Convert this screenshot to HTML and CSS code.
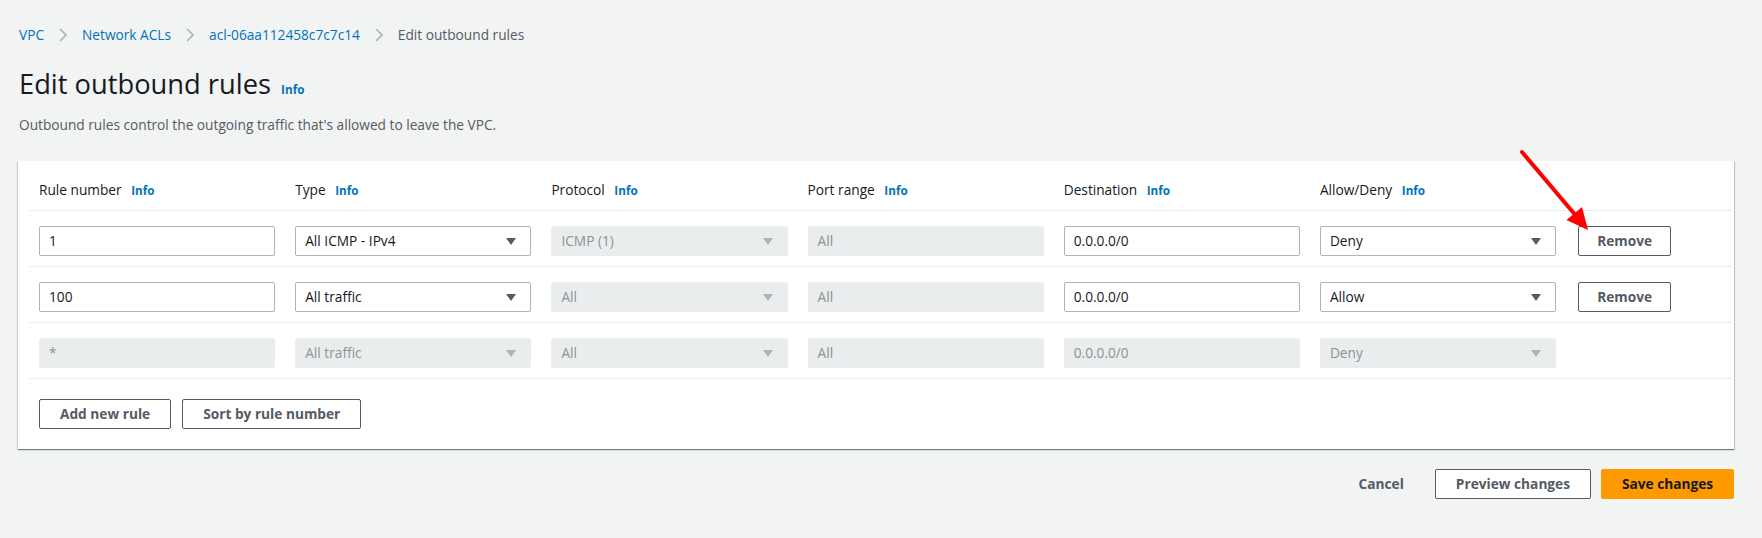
FILE: index.html
```html
<!DOCTYPE html>
<html lang="en">
<head>
<meta charset="utf-8">
<title>Edit outbound rules</title>
<link rel="stylesheet" href="styles.css">
</head>
<body>
<div class="page">
  <nav class="crumbs">
    <a class="crumb-link" href="#">VPC</a>
    <svg class="chev" viewBox="0 0 8 14" width="8" height="14"><path d="M1 1l6 6-6 6" fill="none" stroke="#aab7b8" stroke-width="1.6"/></svg>
    <a class="crumb-link" href="#">Network ACLs</a>
    <svg class="chev" viewBox="0 0 8 14" width="8" height="14"><path d="M1 1l6 6-6 6" fill="none" stroke="#aab7b8" stroke-width="1.6"/></svg>
    <a class="crumb-link" href="#">acl-06aa112458c7c7c14</a>
    <svg class="chev" viewBox="0 0 8 14" width="8" height="14"><path d="M1 1l6 6-6 6" fill="none" stroke="#aab7b8" stroke-width="1.6"/></svg>
    <span class="crumb-current">Edit outbound rules</span>
  </nav>

  <h1 class="title">Edit outbound rules <a class="info" href="#">Info</a></h1>
  <p class="desc">Outbound rules control the outgoing traffic that's allowed to leave the VPC.</p>

  <section class="panel">
    <div class="table">
      <div class="row head">
        <div class="hcell">Rule number <a class="info" href="#">Info</a></div>
        <div class="hcell">Type <a class="info" href="#">Info</a></div>
        <div class="hcell">Protocol <a class="info" href="#">Info</a></div>
        <div class="hcell">Port range <a class="info" href="#">Info</a></div>
        <div class="hcell">Destination <a class="info" href="#">Info</a></div>
        <div class="hcell">Allow/Deny <a class="info" href="#">Info</a></div>
        <div class="hcell"></div>
      </div>

      <div class="row">
        <div class="field">1</div>
        <div class="field select">All ICMP - IPv4<span class="tri"></span></div>
        <div class="field select disabled">ICMP (1)<span class="tri"></span></div>
        <div class="field disabled">All</div>
        <div class="field">0.0.0.0/0</div>
        <div class="field select">Deny<span class="tri"></span></div>
        <button class="btn remove">Remove</button>
      </div>

      <div class="row">
        <div class="field">100</div>
        <div class="field select">All traffic<span class="tri"></span></div>
        <div class="field select disabled">All<span class="tri"></span></div>
        <div class="field disabled">All</div>
        <div class="field">0.0.0.0/0</div>
        <div class="field select">Allow<span class="tri"></span></div>
        <button class="btn remove">Remove</button>
      </div>

      <div class="row">
        <div class="field disabled">*</div>
        <div class="field select disabled">All traffic<span class="tri"></span></div>
        <div class="field select disabled">All<span class="tri"></span></div>
        <div class="field disabled">All</div>
        <div class="field disabled">0.0.0.0/0</div>
        <div class="field select disabled">Deny<span class="tri"></span></div>
        <div></div>
      </div>
    </div>

    <div class="panel-actions">
      <button class="btn">Add new rule</button>
      <button class="btn">Sort by rule number</button>
    </div>
  </section>

  <div class="footer">
    <button class="btn link">Cancel</button>
    <button class="btn">Preview changes</button>
    <button class="btn primary">Save changes</button>
  </div>

  <svg class="arrow" width="90" height="100" viewBox="1510 140 90 100">
    <line x1="1522" y1="152" x2="1577" y2="217" stroke="#f00" stroke-width="4" stroke-linecap="round"/>
    <polygon points="1588,230 1566.5,220 1582,207" fill="#f00"/>
  </svg>
</div>
</body>
</html>
```
FILE: styles.css
```css
* { box-sizing: border-box; }

body {
  margin: 0;
  background: #f2f3f3;
  font-family: "Open Sans", "Liberation Sans", Arial, sans-serif;
  font-size: 13.7px;
  line-height: 20px;
  color: #16191f;
}

.page {
  position: relative;
  padding: 25px 28px 40px 18px;
}

a { text-decoration: none; }

.crumbs {
  display: flex;
  align-items: center;
  gap: 15px;
  padding-left: 1px;
  height: 20px;
}

.crumb-link { color: #0073bb; }
.crumb-current { color: #545b64; }
.chev { display: block; }

.title {
  margin: 21px 0 0 1px;
  font-size: 27.3px;
  line-height: 36px;
  font-weight: 400;
  color: #16191f;
}

.info {
  color: #0073bb;
  font-size: 11.7px;
  font-weight: 700;
  margin-left: 6px;
}

.title .info { font-size: 11.7px; margin-left: 3px; }

.desc {
  margin: 8px 0 0 1px;
  color: #545b64;
}

.panel {
  margin-top: 26px;
  background: #fff;
  box-shadow: 0 1px 1px 0 rgba(0, 28, 36, 0.35), 1px 1px 1px 0 rgba(0, 28, 36, 0.18), -1px 1px 1px 0 rgba(0, 28, 36, 0.12);
  padding-bottom: 20px;
}

.table {
  margin: 0 -4px 0 11px;
}

.row {
  display: grid;
  grid-template-columns: repeat(6, 236.2px) 93px;
  column-gap: 20px;
  padding: 15px 0 10px 10px;
  border-bottom: 1px solid #eaeded;
  align-items: center;
}

.row.head {
  padding: 19px 0 10px 10px;
}

.row .remove { margin-left: 2px; }

.hcell {
  white-space: nowrap;
  color: #16191f;
}

.hcell .info { margin-left: 6px; }

.field {
  position: relative;
  height: 30px;
  border: 1px solid #aab7b8;
  border-radius: 2px;
  padding: 0 9px;
  line-height: 28px;
  color: #16191f;
  background: #fff;
  white-space: nowrap;
}

.field.disabled {
  background: #eaeded;
  border-color: #eaeded;
  color: #879596;
}

.tri {
  position: absolute;
  right: 14px;
  top: 11px;
  width: 0;
  height: 0;
  border-left: 5px solid transparent;
  border-right: 5px solid transparent;
  border-top: 7px solid #545b64;
}

.field.disabled .tri { border-top-color: #aab7b8; }

.btn {
  height: 30px;
  padding: 0 20px;
  border: 1px solid #545b64;
  border-radius: 2px;
  background: #fff;
  color: #545b64;
  font-family: inherit;
  font-size: 13.7px;
  font-weight: 700;
  line-height: 28px;
  white-space: nowrap;
  cursor: pointer;
}

.remove { padding: 0; width: 93px; }

.panel-actions {
  display: flex;
  gap: 11px;
  padding: 20px 0 0 21px;
}

.footer {
  display: flex;
  justify-content: flex-end;
  align-items: center;
  gap: 10px;
  margin-top: 20px;
}

.btn.link {
  border-color: transparent;
  background: transparent;
  padding: 0 18px;
  margin-right: 2px;
}

.btn.primary {
  background: #ff9900;
  border-color: #ff9900;
  color: #16191f;
  width: 133px;
}

.arrow {
  position: absolute;
  left: 1510px;
  top: 140px;
}
```
